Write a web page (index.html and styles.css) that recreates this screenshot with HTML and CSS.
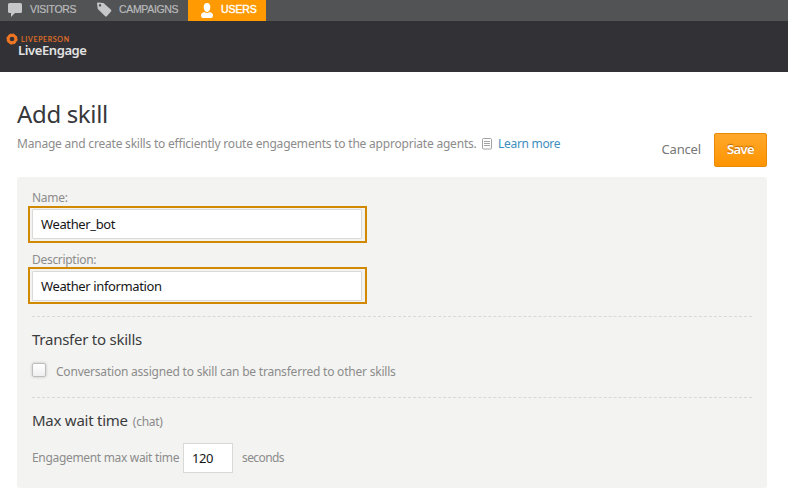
FILE: index.html
```html
<!DOCTYPE html>
<html lang="en">
<head>
<meta charset="utf-8">
<title>Add skill</title>
<link rel="stylesheet" href="styles.css">
</head>
<body>
<nav class="tabs">
  <a class="tab visitors"><svg width="16" height="18" viewBox="0 0 16 18"><path fill="#c6c7c8" d="M2.500 3h11q1.500 0 1.500 1.500v7q0 1.500-1.500 1.500H8L4 17v-4H2.500Q1 13 1 11.500v-7Q1 3 2.500 3Z"/></svg><span>VISITORS</span></a>
  <a class="tab campaigns"><svg width="16" height="18" viewBox="0 0 16 18"><path fill="#c6c7c8" fill-rule="evenodd" d="M1 3.500Q1 2.500 2 2.500L7.500 3 15 9.800Q15.800 10.600 15 11.400L10.800 16.200Q10 17 9.200 16.200L1.800 9Z M4 4.100a1.200 1.200 0 1 0 .01 0Z"/></svg><span>CAMPAIGNS</span></a>
  <a class="tab users"><svg width="14" height="16" viewBox="0 0 14 16"><path fill="#fff" d="M7 1C9.400 1 10.300 2.700 10.300 5c0 2.500-1.200 5-3.300 5S3.700 7.500 3.700 5C3.700 2.700 4.600 1 7 1ZM4.500 10Q7 12 9.500 10q3.500.8 3.500 3.500Q13 16 11 16H3Q1 16 1 13.500 1 10.800 4.500 10Z"/></svg><span>USERS</span></a>
</nav>
<header class="brand">
  <svg class="ring" width="12" height="12" viewBox="0 0 12 12"><circle cx="6" cy="6" r="3.800" fill="none" stroke="#ef7623" stroke-width="2.900"/><circle cx="6" cy="6" r="5.200" fill="none" stroke="#ef7623" stroke-width=".9" stroke-dasharray="2.040 2.040"/></svg>
  <div class="brand-text"><span class="company">LIVEPERSON</span><span class="product">LiveEngage</span></div>
</header>
<main>
  <section class="intro">
    <div>
      <h1>Add skill</h1>
      <p class="lead"><span class="lead-text">Manage and create skills to efficiently route engagements to the appropriate agents.</span><svg width="10" height="12" viewBox="0 0 10 12"><rect x=".5" y=".5" width="9" height="10.500" rx="1" fill="#fff" stroke="#a2a2a2"/><path d="M2 3.500h6M2 5.500h6M2 7.500h6" stroke="#999" stroke-width=".9"/></svg><a class="learn">Learn more</a></p>
    </div>
    <div class="actions"><span class="cancel">Cancel</span><button class="save">Save</button></div>
  </section>
  <form class="panel">
    <label class="name-label">Name:</label>
    <div class="highlight"><div class="field">Weather_bot</div></div>
    <label class="desc-label">Description:</label>
    <div class="highlight"><div class="field">Weather information</div></div>
    <section class="transfer">
      <h2>Transfer to skills</h2>
      <div class="check-row"><i class="checkbox"></i><span>Conversation assigned to skill can be transferred to other skills</span></div>
    </section>
    <section class="wait">
      <h2>Max wait time<small>(chat)</small></h2>
      <div class="wait-row"><span class="engage">Engagement max wait time</span><div class="number">120</div><span class="seconds">seconds</span></div>
    </section>
  </form>
</main>
</body>
</html>
```
FILE: styles.css
```css
* { box-sizing: border-box; }
body { margin: 0; background: #fff; color: #8c8c8c; font: 12px/16px "Noto Sans", "Open Sans", sans-serif; letter-spacing: -.21px; overflow: hidden; }
.tabs { display: flex; height: 21px; background: #525355; color: #b9babb; font: 10.5px/19px "Liberation Sans", sans-serif; letter-spacing: -.33px; }
.tab { display: flex; align-items: flex-start; }
.tab span { -webkit-text-stroke: .2px; }
.visitors { width: 89px; padding-left: 7px; gap: 7px; }
.campaigns { width: 99px; padding-left: 7px; gap: 7px; }
.users { width: 78px; padding-left: 12px; gap: 7px; background: #ff9a03; color: #fff; letter-spacing: -.1px; }
.users svg { margin: 2px 0 0; }
.users span { -webkit-text-stroke: .4px #fff; }
.brand { display: flex; height: 51px; background: #323236; padding: 12px 0 0 6px; }
.brand-text { display: flex; flex-direction: column; }
.company { font: 7px/7px Lato, sans-serif; color: #ef7623; letter-spacing: .7px; margin: 3px 0 1px 3px; -webkit-text-stroke: .1px; }
.product { font: 600 13px/13px "Noto Sans", sans-serif; color: #e2e2e3; letter-spacing: -.4px; }
main { padding: 0 21px 0 17px; }
.intro { display: flex; justify-content: space-between; height: 105px; }
h1 { margin: 26px 0 0; font-size: 24px; line-height: 32px; font-weight: 400; color: #37383b; letter-spacing: -.35px; }
.lead { display: flex; align-items: center; margin: 6px 0 0; white-space: nowrap; }
.lead-text { width: 465px; }
.learn { margin-left: 6px; color: #3e8ebd; letter-spacing: -.3px; }
.actions { display: flex; align-items: center; height: 34px; margin-top: 61px; }
.cancel { font-size: 13px; color: #777; margin: -2px 13px 0 0; letter-spacing: -.15px; }
.save { width: 53px; height: 34px; padding: 0 0 2px; border: 1px solid #e98a0b; border-radius: 2px; background: linear-gradient(#ffa82c, #ff9400); color: #fff; font: 600 13px/16px "Noto Sans", sans-serif; letter-spacing: -.6px; text-shadow: 0 -1px 1px #b86200; }
.panel { height: 311px; background: #f3f3f1; border-radius: 3px; padding: 13px 15px 0; }
label { display: block; height: 16px; letter-spacing: -.3px; }
.highlight { width: 339px; height: 37px; margin-left: -4px; border: 2px solid #d18904; padding: 1px 3px 1px 2px; }
.field { height: 30px; border: 1px solid #d9d9d7; border-radius: 1px; background: #fff; color: #161616; font-size: 13px; line-height: 28px; padding-left: 8px; letter-spacing: -.37px; }
.desc-label { margin-top: 9px; height: 15px; }
.desc-label + .highlight .field { margin-top: 1px; }
.transfer { height: 81px; margin-top: 12px; }
.transfer, .wait { border-top: 1px dashed #d9d9d7; }
h2 { margin: 0; padding-top: 11px; font-weight: 400; font-size: 15px; line-height: 22px; color: #3b3c3e; letter-spacing: -.25px; }
.check-row { display: flex; margin-top: 14px; align-items: center; height: 16px; }
.checkbox { width: 14px; height: 14px; margin: -4px 10px 0 0; border: 1px solid #bdbdbd; border-radius: 2px; background: linear-gradient(#fff, #efefef); box-shadow: 0 0 3px #bbb; }
small { font-size: 12px; color: #8a8a8a; margin-left: 5px; }
.wait-row { display: flex; align-items: center; margin-top: 10px; height: 30px; }
.engage { width: 147px; white-space: nowrap; letter-spacing: -.32px; }
.seconds { letter-spacing: -.6px; }
.number { width: 50px; height: 30px; margin: 0 9px 0 4px; border: 1px solid #d9d9d7; background: #fff; padding-left: 8px; line-height: 29px; font-size: 13px; color: #161616; letter-spacing: -.4px; }
```
